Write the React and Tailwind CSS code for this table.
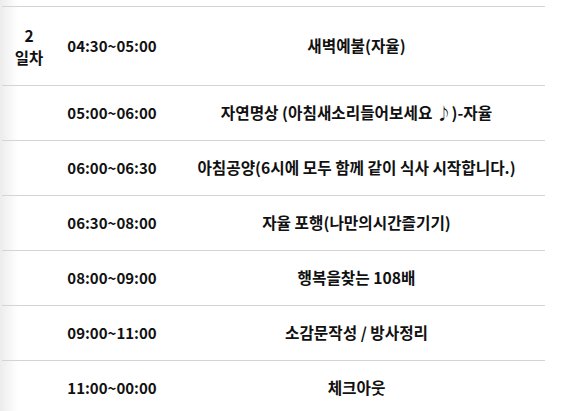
import React from "react";

const schedule = [
  { time: "04:30~05:00", title: "새벽예불(자율)" },
  { time: "05:00~06:00", title: "자연명상 (아침새소리들어보세요 ♪)-자율" },
  { time: "06:00~06:30", title: "아침공양(6시에 모두 함께 같이 식사 시작합니다.)" },
  { time: "06:30~08:00", title: "자율 포행(나만의시간즐기기)" },
  { time: "08:00~09:00", title: "행복을찾는 108배" },
  { time: "09:00~11:00", title: "소감문작성 / 방사정리" },
  { time: "11:00~00:00", title: "체크아웃" },
];

export default function App() {
  return (
    <div
      className="h-[411px] w-[583px] overflow-hidden bg-[linear-gradient(to_right,#ececec,#ffffff_18px)] pt-[6px] pl-[2px] text-[15px] font-bold text-[#111]"
      style={{ fontFamily: '"Noto Sans CJK KR", "Noto Sans", sans-serif' }}
    >
      <div className="w-[543px]">
        {schedule.map((row, i) => (
          <div
            key={row.time}
            className={`grid grid-cols-[54px_112px_1fr] items-center border-t border-[#d4d4d4] ${
              i === 0 ? "h-[79px]" : "h-[55px]"
            }`}
          >
            <div className="text-center text-[15.5px] leading-[22px]">
              {i === 0 && (
                <>
                  <div>2</div>
                  <div>일차</div>
                </>
              )}
            </div>
            <div className="text-center">{row.time}</div>
            <div className="text-center whitespace-nowrap text-[15.7px]">{row.title}</div>
          </div>
        ))}
      </div>
    </div>
  );
}
